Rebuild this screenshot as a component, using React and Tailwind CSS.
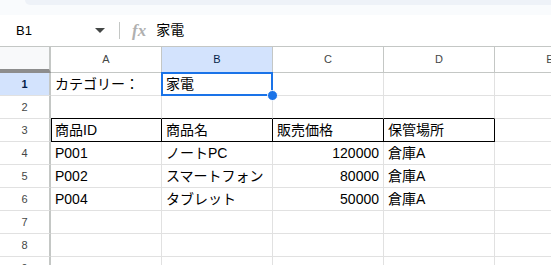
import React from "react";

const font = { fontFamily: '"Liberation Sans", Arial, "Noto Sans CJK JP", sans-serif' };

const cols = ["A", "B", "C", "D", "E"];

// row data: [A, B, C, D]
const rows = [
  ["カテゴリー：", "家電", "", ""],
  ["", "", "", ""],
  ["商品ID", "商品名", "販売価格", "保管場所"],
  ["P001", "ノートPC", "120000", "倉庫A"],
  ["P002", "スマートフォン", "80000", "倉庫A"],
  ["P004", "タブレット", "50000", "倉庫A"],
  ["", "", "", ""],
  ["", "", "", ""],
  ["", "", "", ""],
];

function Cell({ value, r, c }) {
  const isNum = /^\d+$/.test(value);
  const headerRow = r === 2;
  const aboveHeader = r === 1 && c < 4;
  const selected = r === 0 && c === 1;
  let cls = "relative flex items-center h-[23px] px-[4px] text-[14px] text-black whitespace-nowrap border-r border-b ";
  if (headerRow && c < 4) {
    cls += "border-r-black border-b-black ";
  } else {
    cls += "border-r-[#e1e1e1] ";
    cls += aboveHeader ? "border-b-black " : "border-b-[#e1e1e1] ";
  }
  if (headerRow && c === 0) cls += "shadow-[inset_1px_0_0_#000] ";
  if (isNum) cls += "justify-end ";
  if (selected) cls += "z-10 ";
  return (
    <div className={cls}>
      {value}
      {selected && (
        <>
          <div className="absolute -left-[1px] -top-[1px] w-[112px] h-[24px] border-2 border-[#1a73e8] pointer-events-none" />
          <div className="absolute -right-[6px] -bottom-[6px] w-[11px] h-[11px] rounded-full bg-[#1a73e8] border border-white" />
        </>
      )}
    </div>
  );
}

export default function App() {
  return (
    <div className="w-[551px] h-[265px] overflow-hidden bg-white" style={font}>
      {/* toolbar edge */}
      <div className="h-[15px] bg-[#f9fbfd]">
        <div className="ml-[25px] h-[5px] bg-[#eef2f8] rounded-bl-[6px]" />
      </div>

      {/* formula bar */}
      <div className="flex items-center h-[32px] border-b border-[#c4c7c5]">
        <div className="w-[85px] pl-[16px] text-[13px] text-black">B1</div>
        <svg width="10" height="6" viewBox="0 0 10 6" className="ml-[10px]">
          <path d="M0 0h10L5 5z" fill="#444746" />
        </svg>
        <div className="ml-[14px] w-px h-[17px] bg-[#c4c7c5]" />
        <span
          className="ml-[12px] text-[17px] italic font-bold text-[#b0b0b0]"
          style={{ fontFamily: '"Liberation Serif", serif' }}
        >
          fx
        </span>
        <span className="ml-[10px] text-[14px] text-black">家電</span>
      </div>

      {/* grid */}
      <div className="grid grid-cols-[51px_111px_111px_111px_111px_111px]">
        {/* column headers */}
        <div className="h-[26px] bg-[#f8f9fa] border-r-2 border-r-[#c4c7c5] border-b-4 border-b-[#8d8d8d]" />
        {cols.map((c) => (
          <div
            key={c}
            className={
              "h-[26px] flex items-center justify-center text-[11px] border-r border-b border-[#c4c7c5] " +
              (c === "B" ? "bg-[#d3e3fd] text-[#041e49] font-medium" : "bg-white text-[#444746]")
            }
          >
            {c}
          </div>
        ))}

        {rows.map((row, r) => (
          <React.Fragment key={r}>
            <div
              className={
                "h-[23px] flex items-center justify-center text-[11px] border-r-2 border-r-[#c4c7c5] border-b border-b-[#e1e1e1] " +
                (r === 0 ? "bg-[#d3e3fd] text-[#041e49] font-bold" : "bg-white text-[#444746]")
              }
            >
              {r + 1}
            </div>
            {row.map((v, c) => (
              <Cell key={c} value={v} r={r} c={c} />
            ))}
            <div className="h-[23px] border-r border-b border-[#e1e1e1]" />
          </React.Fragment>
        ))}
      </div>
    </div>
  );
}
